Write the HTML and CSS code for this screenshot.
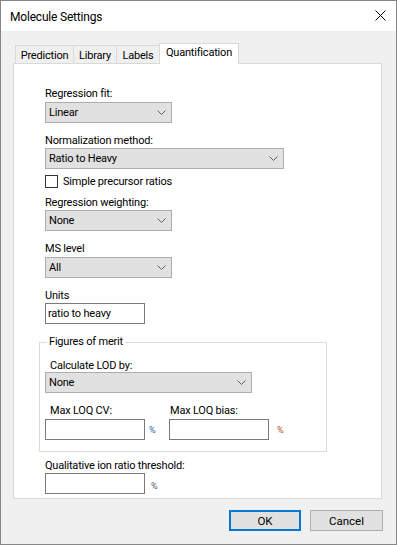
FILE: index.html
```html
<!DOCTYPE html>
<html lang="en">
<head>
    <meta charset="UTF-8">
    <link rel="stylesheet" href="styles.css">
    <title>Molecule Settings</title>
</head>
<body>
    <div class="window">
        <div class="titlebar">
            <span class="title">Molecule Settings</span>
            <svg class="close" width="11" height="11" viewBox="0 0 11 11">
                <path d="M0.5 0.5 L10.5 10.5 M10.5 0.5 L0.5 10.5" stroke="#000" stroke-width="1" fill="none"/>
            </svg>
        </div>

        <div class="client">
            <div class="tabs">
                <div class="tab prediction">Prediction</div>
                <div class="tab library">Library</div>
                <div class="tab labels">Labels</div>
                <div class="tab active">Quantification</div>
            </div>

            <div class="panel">
                <div class="field first">
                    <label>Regression fit:</label>
                    <div class="combo short"><span>Linear</span>
                        <svg class="chev" width="9" height="5" viewBox="0 0 9 5"><path d="M0.5 0.5 L4.5 4.5 L8.5 0.5" stroke="#606060" fill="none"/></svg>
                    </div>
                </div>

                <div class="field">
                    <label>Normalization method:</label>
                    <div class="combo long"><span>Ratio to Heavy</span>
                        <svg class="chev" width="9" height="5" viewBox="0 0 9 5"><path d="M0.5 0.5 L4.5 4.5 L8.5 0.5" stroke="#606060" fill="none"/></svg>
                    </div>
                </div>

                <div class="check-row">
                    <span class="checkbox"></span>
                    <span>Simple precursor ratios</span>
                </div>

                <div class="field after-check">
                    <label>Regression weighting:</label>
                    <div class="combo short"><span>None</span>
                        <svg class="chev" width="9" height="5" viewBox="0 0 9 5"><path d="M0.5 0.5 L4.5 4.5 L8.5 0.5" stroke="#606060" fill="none"/></svg>
                    </div>
                </div>

                <div class="field">
                    <label>MS level</label>
                    <div class="combo short gap2"><span>All</span>
                        <svg class="chev" width="9" height="5" viewBox="0 0 9 5"><path d="M0.5 0.5 L4.5 4.5 L8.5 0.5" stroke="#606060" fill="none"/></svg>
                    </div>
                </div>

                <div class="field">
                    <label>Units</label>
                    <div class="textbox">ratio to heavy</div>
                </div>

                <fieldset class="merit">
                    <legend>Figures of merit</legend>
                    <div class="field lod">
                        <label class="indent">Calculate LOD by:</label>
                        <div class="combo lodbox"><span>None</span>
                            <svg class="chev" width="9" height="5" viewBox="0 0 9 5"><path d="M0.5 0.5 L4.5 4.5 L8.5 0.5" stroke="#606060" fill="none"/></svg>
                        </div>
                    </div>
                    <div class="loq-row">
                        <div class="loq-col first-col">
                            <label class="indent">Max LOQ CV:</label>
                            <div class="unit-row">
                                <div class="textbox"></div>
                                <span class="pct blue">%</span>
                            </div>
                        </div>
                        <div class="loq-col">
                            <label class="indent-small">Max LOQ bias:</label>
                            <div class="unit-row">
                                <div class="textbox"></div>
                                <span class="pct red wide">%</span>
                            </div>
                        </div>
                    </div>
                </fieldset>

                <div class="field after-group">
                    <label>Qualitative ion ratio threshold:</label>
                    <div class="unit-row">
                        <div class="textbox"></div>
                        <span class="pct grey mid">%</span>
                    </div>
                </div>
            </div>

            <div class="buttons">
                <button class="btn default">OK</button>
                <button class="btn">Cancel</button>
            </div>
        </div>
    </div>
</body>
</html>
```

FILE: styles.css
```css
body {
    margin: 0;
    padding: 0;
    font-family: Roboto, "Liberation Sans", sans-serif;
    font-size: 11px;
    letter-spacing: -0.2px;
    color: #000;
    background-color: #f0f0f0;
}

.window {
    width: 397px;
    height: 545px;
    box-sizing: border-box;
    border: 1px solid #858585;
    background-color: #f0f0f0;
    display: flex;
    flex-direction: column;
}

.titlebar {
    height: 30px;
    background-color: #ffffff;
    display: flex;
    align-items: center;
    justify-content: space-between;
    padding: 1px 10px 0 9px;
}

.title {
    font-size: 12px;
}

.close {
    display: block;
    margin-top: -2px;
}

.client {
    flex: 1;
    display: flex;
    flex-direction: column;
    padding: 12px 14px 13px 12px;
}

/* tab strip */
.tabs {
    display: flex;
    align-items: flex-end;
    margin-left: 2px;
    height: 20px;
    position: relative;
    z-index: 1;
}

.tab {
    height: 18px;
    line-height: 19px;
    box-sizing: border-box;
    text-align: center;
    background-color: #f0f0f0;
    border: 1px solid #d9d9d9;
    border-bottom: none;
    margin-right: -1px;
}

.tab.prediction {
    width: 59px;
}

.tab.library,
.tab.labels {
    width: 44px;
}

.tab.active {
    width: 80px;
    height: 21px;
    line-height: 18px;
    background-color: #ffffff;
    margin-bottom: -1px;
}

.panel {
    height: 436px;
    box-sizing: border-box;
    background-color: #ffffff;
    border: 1px solid #d9d9d9;
    padding: 22px 0 0 31px;
}

/* fields */
label,
legend {
    display: block;
    line-height: 16px;
    height: 14px;
}

.field {
    margin-top: 10px;
}

.field.first {
    margin-top: 0;
}

.field.after-check {
    margin-top: 6px;
}

.field.after-group {
    margin-top: 6px;
}

.combo {
    margin-top: 1px;
    height: 21px;
    box-sizing: border-box;
    background-color: #e1e1e1;
    border: 1px solid #adadad;
    display: flex;
    align-items: center;
    justify-content: space-between;
    padding: 0 5px 0 3px;
}

.field.first .combo,
.combo.gap2 {
    margin-top: 2px;
}

.combo.short {
    width: 127px;
}

.combo.long {
    width: 239px;
}

.combo.lodbox {
    width: 207px;
    margin-top: 0;
}

.chev {
    display: block;
}

.textbox {
    margin-top: 1px;
    width: 100px;
    height: 21px;
    box-sizing: border-box;
    border: 1px solid #7a7a7a;
    background-color: #ffffff;
    line-height: 19px;
    padding-left: 2px;
}

.check-row {
    margin-top: 5px;
    height: 15px;
    line-height: 15px;
    display: flex;
    align-items: center;
}

.checkbox {
    width: 13px;
    height: 13px;
    box-sizing: border-box;
    border: 1px solid #333333;
    background-color: #ffffff;
    margin-right: 5px;
}

/* figures of merit group */
.merit {
    margin: 11px 0 0 -6px;
    width: 288px;
    box-sizing: border-box;
    border: 1px solid #dcdcdc;
    padding: 0 0 11px 5px;
}

.merit legend {
    padding: 0 2px;
    margin-left: 2px;
    line-height: 14px;
}

.field.lod {
    margin-top: 9px;
}

.indent {
    padding-left: 5px;
}

.indent-small {
    padding-left: 1px;
}

.loq-row {
    display: flex;
    margin-top: 10px;
}

.loq-col.first-col {
    width: 124px;
}

.unit-row {
    display: flex;
    align-items: center;
    margin-top: 2px;
}

.unit-row .textbox {
    margin-top: 0;
}

.field.after-group .unit-row {
    margin-top: 1px;
}

.pct {
    font-size: 9px;
    letter-spacing: 0;
    margin-left: 4px;
    margin-top: 1px;
}

.pct.wide {
    margin-left: 8px;
}

.pct.mid {
    margin-left: 6px;
    margin-top: 4px;
}

.pct.blue {
    color: #2f5fa8;
}

.pct.red {
    color: #a5502e;
}

.pct.grey {
    color: #4a5570;
}

/* dialog buttons */
.buttons {
    display: flex;
    justify-content: flex-end;
    gap: 9px;
    margin-top: 11px;
    margin-right: -1px;
}

.btn {
    width: 73px;
    height: 21px;
    box-sizing: border-box;
    font-family: inherit;
    font-size: 11.5px;
    letter-spacing: 0;
    background-color: #e1e1e1;
    border: 1px solid #adadad;
    padding: 0;
    color: #000;
}

.btn.default {
    width: 72px;
    border: 2px solid #0078d7;
}
```
